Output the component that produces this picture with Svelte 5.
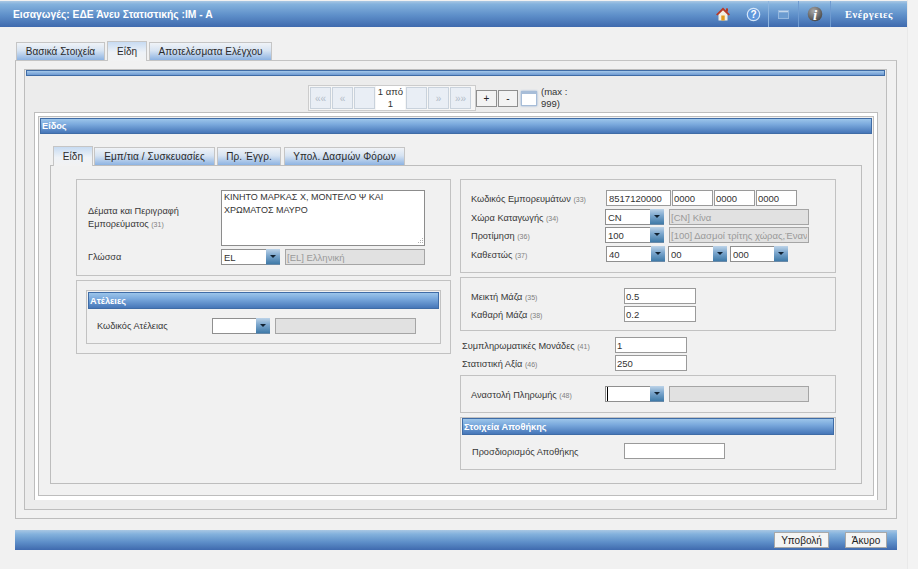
<script>
  const mainTabs = [
    { label: 'Βασικά Στοιχεία', w: 89, active: false },
    { label: 'Είδη', w: 40, active: true },
    { label: 'Αποτελέσματα Ελέγχου', w: 123, active: false }
  ];
  const subTabs = [
    { label: 'Είδη', w: 40, active: true },
    { label: 'Εμπ/τια / Συσκευασίες', w: 121, active: false },
    { label: 'Πρ. Έγγρ.', w: 64, active: false },
    { label: 'Υπολ. Δασμών Φόρων', w: 121, active: false }
  ];
  const pagerLeft = ['«« ', '« ', ''];
  const pagerRight = ['', '» ', '»» '];
</script>

{#snippet combo(value, w, caret = false)}
  <span class="combo">
    <input class="combo-input" style="width:{w}px" {value} readonly />
    {#if caret}<span class="caret"></span>{/if}
    <span class="combo-btn"><span class="tri"></span></span>
  </span>
{/snippet}

{#snippet label(text, no)}
  <span class="lbl">{text}{#if no}&nbsp;<small>({no})</small>{/if}</span>
{/snippet}

<div class="page">
  <header class="topbar">
    <h1>Εισαγωγές: ΕΔΕ Άνευ Στατιστικής :IM - A</h1>
    <div class="tools">
      <span class="tool t-home">
        <svg width="16" height="16" viewBox="0 0 16 16">
          <path d="M3.5 8v6.5h9V8L8 3.5z" fill="#f4efe2" />
          <rect x="6.3" y="9.5" width="3.4" height="5" fill="#e39a1c" />
          <path d="M1 8.6 8 1.6l7 7-1.5 1L8 4.3 2.5 9.6z" fill="#b93a26" />
          <rect x="11" y="2.4" width="2" height="3.2" fill="#b93a26" />
        </svg>
      </span>
      <span class="tool t-help">
        <svg width="15" height="15" viewBox="0 0 15 15">
          <circle cx="7.5" cy="7.5" r="6.2" fill="#5f97dc" stroke="#d5e6f8" stroke-width="1.2" />
          <text x="7.5" y="11" text-anchor="middle" font-size="10" font-weight="700" fill="#fff" font-family="Liberation Sans, sans-serif">?</text>
        </svg>
      </span>
      <span class="tool t-win">
        <svg width="11" height="9" viewBox="0 0 11 9">
          <rect x=".5" y=".5" width="10" height="8" fill="#6b9bd0" stroke="#94b7de" />
          <rect x="1" y="1" width="9" height="1.3" fill="#c3d7ec" />
        </svg>
      </span>
      <span class="tool t-info">
        <svg width="16" height="16" viewBox="0 0 16 16">
          <defs>
            <radialGradient id="ball" cx=".4" cy=".3" r=".8">
              <stop offset="0" stop-color="#a8a8a8" /><stop offset="1" stop-color="#3e3e3e" />
            </radialGradient>
          </defs>
          <circle cx="8" cy="8" r="7.3" fill="url(#ball)" />
          <text x="8" y="13.5" text-anchor="middle" font-size="15" font-weight="700" font-style="italic" fill="#fff" font-family="Liberation Serif, serif">i</text>
        </svg>
      </span>
      <span class="tool t-actions">Ενέργειες</span>
    </div>
  </header>

  <main class="content">
    <nav class="tabs main-tabs">
      {#each mainTabs as t}
        <span class="tab" class:active={t.active} style="width:{t.w}px">{t.label}</span>
      {/each}
    </nav>

    <section class="outer">
      <div class="panel2">
        <div class="thin-bar"></div>

        <div class="pager">
          <div class="pager-group">
            {#each pagerLeft as p}<span class="pg">{p}</span>{/each}
            <span class="pg-text">1 από<br />1</span>
            {#each pagerRight as p}<span class="pg">{p}</span>{/each}
          </div>
          <button class="pm">+</button>
          <button class="pm minus">-</button>
          <span class="pg-icon"></span>
          <span class="pg-max">(max :<br />999)</span>
        </div>

        <div class="item-box">
          <div class="item-inner">
            <div class="sec-head item-head">Είδος</div>

            <nav class="tabs sub-tabs">
              {#each subTabs as t}
                <span class="tab" class:active={t.active} style="width:{t.w}px">{t.label}</span>
              {/each}
            </nav>

            <div class="tab-panel">
              <div class="col col-left">
                <div class="box box-desc">
                  <div class="desc-row">
                    <span class="lbl desc-lbl">Δέματα και Περιγραφή<br />Εμπορεύματος&nbsp;<small>(31)</small></span>
                    <span class="ta-wrap">
                      <textarea readonly>ΚΙΝΗΤΟ ΜΑΡΚΑΣ Χ, ΜΟΝΤΕΛΟ Ψ ΚΑΙ ΧΡΩΜΑΤΟΣ ΜΑΥΡΟ</textarea>
                      <svg class="grip" width="7" height="7" viewBox="0 0 7 7">
                        <g fill="#b0b0b0">
                          <rect x="5" y="0" width="1" height="1" />
                          <rect x="3" y="2" width="1" height="1" /><rect x="5" y="2" width="1" height="1" />
                          <rect x="1" y="4" width="1" height="1" /><rect x="3" y="4" width="1" height="1" /><rect x="5" y="4" width="1" height="1" />
                        </g>
                      </svg>
                    </span>
                  </div>
                  <div class="lang-row">
                    <span class="lbl desc-lbl">Γλώσσα</span>
                    {@render combo('EL', 45)}
                    <input class="dis lang-dis" value="[EL] Ελληνική" readonly />
                  </div>
                </div>

                <div class="box box-ate">
                  <div class="fieldset">
                    <div class="sec-head ate-head">Ατέλειες</div>
                    <div class="ate-row">
                      <span class="lbl ate-lbl">Κωδικός Ατέλειας</span>
                      {@render combo('', 44)}
                      <input class="dis ate-dis" value="" readonly />
                    </div>
                  </div>
                </div>
              </div>

              <div class="col col-right">
                <div class="box box-codes">
                  <div class="row">
                    <span class="rl">{@render label('Κωδικός Εμπορευμάτων', 33)}</span>
                    <input class="txt c1" value="8517120000" readonly />
                    <input class="txt c2" value="0000" readonly />
                    <input class="txt c2" value="0000" readonly />
                    <input class="txt c2" value="0000" readonly />
                  </div>
                  <div class="row">
                    <span class="rl">{@render label('Χώρα Καταγωγής', 34)}</span>
                    {@render combo('CN', 45)}
                    <input class="dis wide" value="[CN] Κίνα" readonly />
                  </div>
                  <div class="row r-pref">
                    <span class="rl">{@render label('Προτίμηση', 36)}</span>
                    {@render combo('100', 45)}
                    <input class="dis wide" value="[100] Δασμοί τρίτης χώρας,Έναντι" readonly />
                  </div>
                  <div class="row r-three">
                    <span class="rl">{@render label('Καθεστώς', 37)}</span>
                    {@render combo('40', 45)}
                    {@render combo('00', 45)}
                    {@render combo('000', 44)}
                  </div>
                </div>

                <div class="box box-mass">
                  <div class="row"><span class="rl rl-mass">{@render label('Μεικτή Μάζα', 35)}</span><input class="txt num" value="0.5" readonly /></div>
                  <div class="row"><span class="rl rl-mass">{@render label('Καθαρή Μάζα', 38)}</span><input class="txt num" value="0.2" readonly /></div>
                </div>

                <div class="plain">
                  <div class="row"><span class="rl-plain">{@render label('Συμπληρωματικές Μονάδες', 41)}</span><input class="txt num" value="1" readonly /></div>
                  <div class="row"><span class="rl-plain">{@render label('Στατιστική Αξία', 46)}</span><input class="txt num" value="250" readonly /></div>
                </div>

                <div class="box box-susp">
                  <div class="row">
                    <span class="rl">{@render label('Αναστολή Πληρωμής', 48)}</span>
                    {@render combo('', 45, true)}
                    <input class="dis wide" value="" readonly />
                  </div>
                </div>

                <div class="box box-store">
                  <div class="sec-head store-head">Στοιχεία Αποθήκης</div>
                  <div class="row store-row">
                    <span class="rl rl-mass">{@render label('Προσδιορισμός Αποθήκης')}</span>
                    <input class="txt store-in" value="" readonly />
                  </div>
                </div>
              </div>
            </div>
          </div>
        </div>
      </div>
    </section>

    <footer class="bottombar">
      <button class="fbtn submit">Υποβολή</button>
      <button class="fbtn cancel">Άκυρο</button>
    </footer>
  </main>
</div>

<style>
  :global(body) {
    margin: 0;
    background: #f3f3f3;
    font-family: "Liberation Sans", Arial, sans-serif;
    font-size: 10px;
    color: #383838;
  }
  * { box-sizing: border-box; }

  .page { width: 908px; height: 569px; overflow: hidden; background: #f1f1f1; border-right: 1px solid #e9e9e9; }

  .topbar {
    margin-top: 1px;
    height: 26px;
    display: flex;
    align-items: center;
    justify-content: space-between;
    padding-left: 13px;
    background: linear-gradient(#a9c7e3 0, #84b2dd 12%, #5e8fc9 55%, #3f6aae 100%);
  }
  h1 { margin: 0; font-size: 10.3px; font-weight: 700; color: #fff; }
  .tools { display: flex; height: 100%; align-items: center; }
  .tool { display: flex; align-items: center; justify-content: center; height: 100%; }
  .t-home { width: 30px; }
  .t-help { width: 31px; border-right: 1px solid #8db4de; }
  .t-win { width: 30px; border-right: 1px solid #6f9bd0; }
  .t-info { width: 32px; border-right: 1px solid #6f9bd0; }
  .t-actions { width: 76px; color: #fff; font-weight: 700; font-size: 10.5px; font-family: "Liberation Serif", "Liberation Sans", serif; letter-spacing: .5px; }

  .content { padding: 0 0 0 15px; width: 897px; }

  .tabs { display: flex; align-items: flex-end; }
  .tab {
    height: 18px;
    display: flex;
    align-items: center;
    justify-content: center;
    border: 1px solid #c5c5c5;
    border-bottom: 0;
    background: linear-gradient(#f0f3f7 0, #d6e3f2 45%, #8db3e2 100%);
    color: #2a2a2a;
    font-size: 10px;
    white-space: nowrap;
    margin-right: 2px;
  }
  .tab.active {
    height: 20px;
    background: linear-gradient(#c7dbf2 0, #eef2f7 55%, #f2f2f2 100%);
    position: relative;
    margin-bottom: -1px;
    z-index: 1;
  }
  .main-tabs { height: 19px; margin-top: 14px; padding-left: 1px; }

  .outer {
    height: 459px;
    border: 1px solid #bdbdbd;
    border-top-color: #c4c4c4;
    padding: 8px 9px 8px 8px;
    background: #f1f1f1;
  }
  .panel2 {
    height: 441px;
    border: 1px solid #bdbdbd;
    background: #ececec;
    padding: 0 0 0 1px;
  }
  .thin-bar {
    height: 6px;
    margin-right: 1px;
    border: 1px solid #3f6ca6;
    background: linear-gradient(#a4c8ea, #6d9ad2);
  }

  .pager { display: flex; align-items: center; margin: 9px 0 1px 282px; height: 26px; }
  .pager-group {
    width: 168px;
    height: 26px;
    border: 1px solid #ccc;
    display: flex;
    align-items: center;
    background: #f6f6f6;
    padding-left: 1px;
    gap: 1px;
  }
  .pg {
    width: 21px;
    height: 22px;
    border: 1px solid #c9d2dc;
    background: #e9eef5;
    color: #b3bcc8;
    font-size: 10px;
    display: flex;
    align-items: center;
    justify-content: center;
  }
  .pg-text { width: 29px; text-align: center; font-size: 9.5px; line-height: 12px; color: #333; background: #fff; height: 24px; }
  .pm {
    width: 21px;
    height: 17px;
    margin: 0;
    padding: 0;
    border: 1px solid #8f8f8f;
    background: #f3f3f3;
    font: 10px "Liberation Sans", sans-serif;
    color: #222;
  }
  .pm.minus { margin-left: 1px; width: 20px; }
  .pg-icon {
    width: 16px;
    height: 15px;
    margin-left: 3px;
    border: 1px solid #a7bdd8;
    border-top: 3px solid #a7bdd8;
    background: #fff;
    box-shadow: 0 0 2px #8fabcf;
  }
  .pg-max { margin-left: 4px; width: 32px; font-size: 9.5px; line-height: 12px; color: #333; }

  .item-box {
    width: 844px;
    height: 388px;
    margin-left: 8px;
    border: 1px solid #bdbdbd;
    border-bottom: 0;
    background: #fff;
    padding: 3px 3px 4px 3px;
  }
  .item-inner {
    height: 380px;
    border: 1px solid #bdbdbd;
    background: #f1f1f1;
    padding: 1px 0 0 1px;
  }

  .sec-head {
    border: 1px solid #3f6ca6;
    background: linear-gradient(#9cc5ea 0, #79a8dc 40%, #4676b8 100%);
    color: #fff;
    font-weight: 700;
    font-size: 9.2px;
    display: flex;
    align-items: center;
    padding-left: 1px;
  }
  .item-head { height: 16px; width: 832px; }

  .sub-tabs { height: 20px; margin: 11px 0 0 12px; }
  .sub-tabs .tab { letter-spacing: .1px; }
  .sub-tabs .tab:first-child { margin-left: 1px; margin-right: 1px; }
  .sub-tabs .tab:nth-child(3) { margin-right: 3px; }

  .tab-panel {
    width: 812px;
    height: 319px;
    margin-left: 10px;
    border: 1px solid #bdbdbd;
    padding: 13px 0 0 25px;
    display: flex;
    gap: 9px;
    background: #f1f1f1;
  }
  .col { width: 375px; display: flex; flex-direction: column; }
  .col-right { width: 376px; }

  .box { border: 1px solid #c2c2c2; }

  .lbl { font-size: 9.2px; color: #383838; }
  small { font-size: 7px; color: #808080; }

  input, textarea {
    font-family: "Liberation Sans", Arial, sans-serif;
    font-size: 9px;
    color: #333;
    border-radius: 0;
    outline: none;
    margin: 0;
  }

  .box-desc { height: 97px; padding: 10px 0 0 11px; }
  .desc-row { display: flex; align-items: center; height: 56px; }
  .desc-lbl { width: 133px; flex: none; line-height: 13px; }
  .ta-wrap { position: relative; display: block; width: 204px; height: 56px; }
  textarea {
    display: block;
    width: 204px;
    height: 56px;
    padding: 0 2px;
    border: 1px solid #8c8c8c;
    background: #fff;
    line-height: 13px;
    resize: none;
    overflow: hidden;
  }
  .grip { position: absolute; right: 1px; bottom: 1px; }
  .lang-row { display: flex; align-items: center; height: 16px; margin-top: 3px; }
  .lang-dis { width: 140px; height: 16px; margin-left: 5px; }

  .combo { display: inline-flex; align-items: stretch; height: 16px; position: relative; flex: none; }
  .combo-input {
    height: 16px;
    padding: 0 2px;
    border: 1px solid #8f8f8f;
    border-right: 0;
    background: #fff;
    font-size: 9.5px;
  }
  .combo-btn {
    width: 14px;
    background: linear-gradient(#bcd3e8, #7ba6cd 45%, #3f7aa8);
    border-bottom: 1px solid #6a8aa8;
    display: flex;
    align-items: center;
    justify-content: center;
  }
  .tri { width: 0; height: 0; border: 3px solid transparent; border-top: 3px solid #123; border-bottom: 0; }
  .caret { position: absolute; left: 2px; top: 1px; width: 1px; height: 14px; background: #000; }

  .dis {
    background: #e1e1e1;
    border: 1px solid #a5a5a5;
    color: #999;
    padding: 0 1px;
    font-size: 9.5px;
  }

  .box-ate { height: 74px; margin-top: 4px; padding: 9px 9px 0 9px; }
  .fieldset { height: 54px; border: 1px solid #c2c2c2; padding: 1px; }
  .ate-head { height: 17px; }
  .ate-row { display: flex; align-items: center; margin-top: 9px; height: 16px; }
  .ate-lbl { width: 124px; padding-left: 9px; flex: none; }
  .ate-dis { width: 141px; height: 16px; margin-left: 5px; }

  .row { display: flex; align-items: center; height: 16px; }
  .rl { width: 144px; padding-left: 10px; flex: none; }
  .rl-mass { width: 163px; }
  .rl-plain { width: 155px; flex: none; padding-left: 2px; }

  .box-codes { height: 94px; padding-top: 10px; }
  .box-codes .row { margin-bottom: 3px; }
  .box-codes .r-pref { margin-top: -1px; }
  .txt {
    height: 16px;
    padding: 0 1px;
    border: 1px solid #9a9a9a;
    background: #fff;
    font-size: 9.5px;
  }
  .c1 { width: 65px; margin-left: 1px; padding-left: 2px; }
  .c2 { width: 41px; margin-left: 1px; }
  .wide { width: 140px; height: 16px; margin-left: 5px; }
  .r-three .combo { margin-left: 1px; margin-right: 2px; }

  .box-mass { height: 54px; margin-top: 4px; padding-top: 10px; }
  .box-mass .row { margin-bottom: 2px; }
  .num { width: 72px; }
  .plain { margin-top: 6px; }
  .plain .row { margin-bottom: 2px; }
  .box-susp { height: 38px; margin-top: 2px; padding-top: 10px; }
  .box-store { height: 53px; margin-top: 4px; padding: 0 1px; }
  .store-head { height: 17px; }
  .store-row { margin-top: 8px; }
  .store-row .rl-mass { width: 162px; }
  .store-in { width: 101px; }

  .bottombar {
    margin-top: 11px;
    height: 20px;
    width: 882px;
    display: flex;
    align-items: center;
    justify-content: flex-end;
    gap: 16px;
    padding-right: 10px;
    background: linear-gradient(#a9c7e3 0, #84b2dd 20%, #5e8fc9 60%, #3f6aae 100%);
  }
  .fbtn {
    height: 16px;
    padding: 0;
    border: 1px solid #a8a8a8;
    background: #f4f4f4;
    font: 10px "Liberation Sans", sans-serif;
    color: #222;
  }
  .submit { width: 55px; }
  .cancel { width: 42px; }
</style>
